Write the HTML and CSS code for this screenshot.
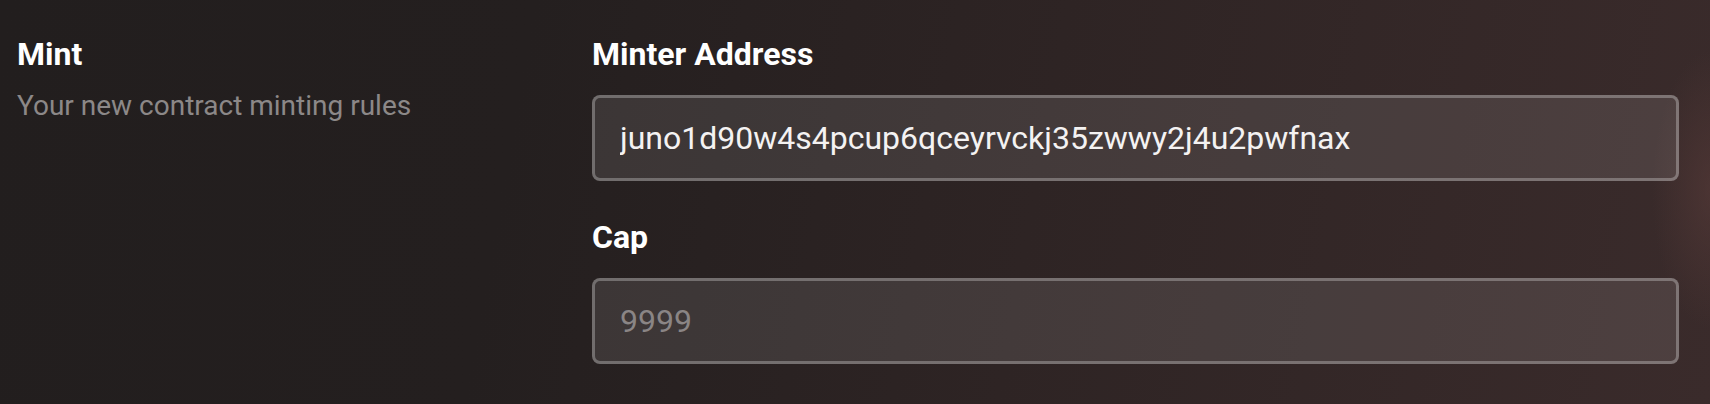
FILE: index.html
```html
<!DOCTYPE html>
<html lang="en">
<head>
<meta charset="utf-8">
<title>Mint</title>
<link rel="stylesheet" href="styles.css">
</head>
<body>
<section class="section">
  <div class="intro">
    <h2 class="title">Mint</h2>
    <p class="subtitle">Your new contract minting rules</p>
  </div>
  <div class="fields">
    <div class="field">
      <label class="label" for="minter">Minter Address</label>
      <input class="input" id="minter" type="text" value="juno1d90w4s4pcup6qceyrvckj35zwwy2j4u2pwfnax">
    </div>
    <div class="field">
      <label class="label" for="cap">Cap</label>
      <input class="input" id="cap" type="text" placeholder="9999">
    </div>
  </div>
</section>
</body>
</html>
```

FILE: styles.css
```css
html, body {
  margin: 0;
  height: 100%;
}
body {
  font-family: Roboto, "Liberation Sans", sans-serif;
  color: #fff;
  background:
    radial-gradient(ellipse 60px 140px at 1712px 190px, rgba(90, 60, 58, 0.55), rgba(90, 60, 58, 0) 100%),
    linear-gradient(100deg, #221e1e 0%, #241f1f 30%, #2e2424 60%, #3a2b2b 100%);
  overflow: hidden;
}
.section {
  display: flex;
  padding: 34px 31px 0 17px;
}
.intro {
  width: 575px;
  flex: none;
}
.title {
  margin: 0;
  font-size: 32px;
  line-height: 40px;
  font-weight: 700;
}
.subtitle {
  margin: 14px 0 0;
  font-size: 28px;
  line-height: 36px;
  color: #8c8888;
}
.fields {
  flex: 1;
  display: flex;
  flex-direction: column;
  gap: 36px;
}
.field {
  display: flex;
  flex-direction: column;
  gap: 21px;
}
.label {
  font-size: 32px;
  line-height: 40px;
  font-weight: 700;
}
.input {
  box-sizing: border-box;
  height: 86px;
  width: 100%;
  margin: 0;
  padding: 0 25px;
  border: 3px solid rgba(255, 255, 255, 0.28);
  border-radius: 8px;
  background: rgba(255, 255, 255, 0.1);
  color: #f4f2f2;
  font-family: Roboto, "Liberation Sans", sans-serif;
  font-size: 32px;
  outline: none;
}
.input::placeholder {
  color: #8a8585;
}
```
